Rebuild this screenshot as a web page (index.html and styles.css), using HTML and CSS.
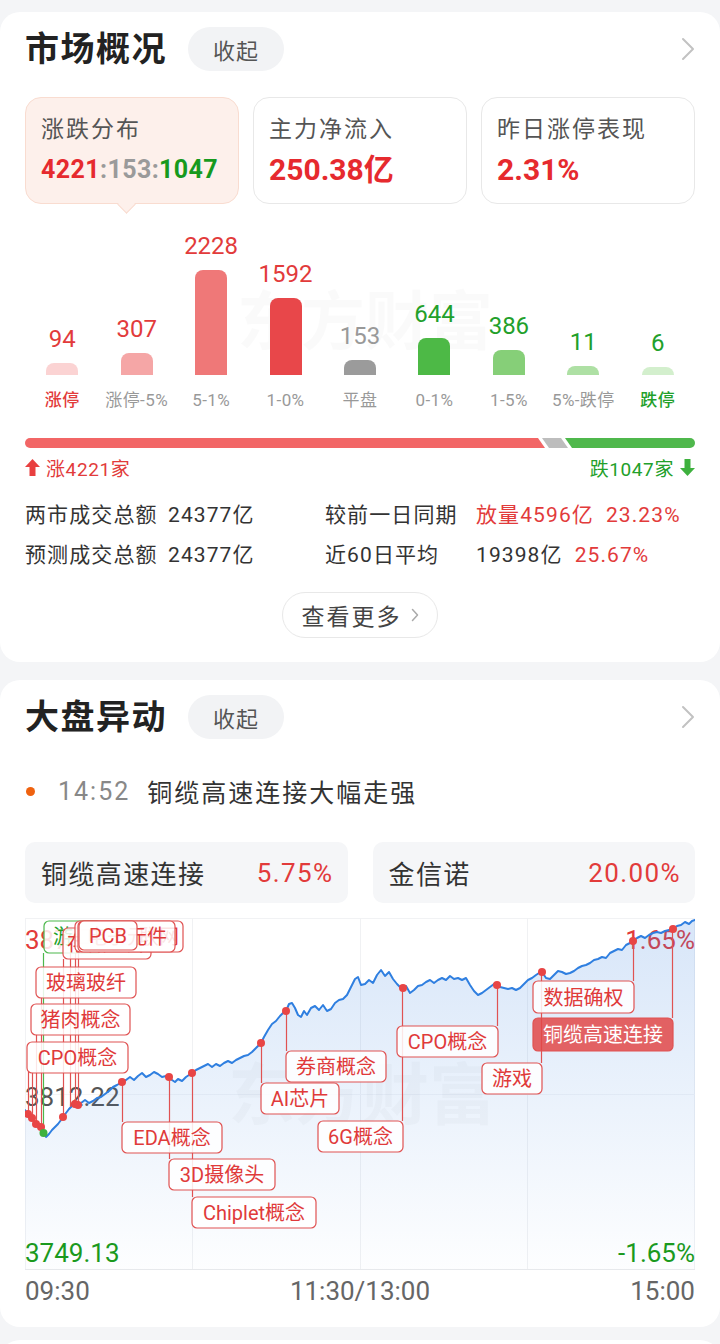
FILE: index.html
```html
<!DOCTYPE html>
<html lang="zh-CN">
<head>
<meta charset="utf-8">
<title>市场概况</title>
<link rel="stylesheet" href="styles.css">
</head>
<body>
<section class="card card-market">
  <header class="card-head">
    <h2 class="card-title">市场概况</h2>
    <span class="pill">收起</span>
    <svg class="chev" width="14" height="24" viewBox="0 0 14 24"><polyline points="2,2 12,12 2,22"/></svg>
  </header>

  <div class="tabs">
    <div class="tab tab-on">
      <div class="tab-label">涨跌分布</div>
      <div class="tab-num tab-num-sm"><span class="c-up">4221</span><span class="c-flat">:153:</span><span class="c-down">1047</span></div>
    </div>
    <div class="tab">
      <div class="tab-label">主力净流入</div>
      <div class="tab-num c-up">250.38亿</div>
    </div>
    <div class="tab">
      <div class="tab-label">昨日涨停表现</div>
      <div class="tab-num c-up">2.31%</div>
    </div>
  </div>

  <div class="dist">
    <div class="watermark wm-bars">东方财富</div>
    <div class="dist-col">
      <div class="dist-top"><span class="dist-val c-up2">94</span><span class="bar b1" style="height:12px"></span></div>
      <span class="dist-cat c-up2">涨停</span>
    </div>
    <div class="dist-col">
      <div class="dist-top"><span class="dist-val c-up2">307</span><span class="bar b2" style="height:22px"></span></div>
      <span class="dist-cat">涨停-5%</span>
    </div>
    <div class="dist-col">
      <div class="dist-top"><span class="dist-val c-up2">2228</span><span class="bar b3" style="height:105px"></span></div>
      <span class="dist-cat">5-1%</span>
    </div>
    <div class="dist-col">
      <div class="dist-top"><span class="dist-val c-up2">1592</span><span class="bar b4" style="height:77px"></span></div>
      <span class="dist-cat">1-0%</span>
    </div>
    <div class="dist-col">
      <div class="dist-top"><span class="dist-val c-gray">153</span><span class="bar b5" style="height:15px"></span></div>
      <span class="dist-cat">平盘</span>
    </div>
    <div class="dist-col">
      <div class="dist-top"><span class="dist-val c-down2">644</span><span class="bar b6" style="height:37px"></span></div>
      <span class="dist-cat">0-1%</span>
    </div>
    <div class="dist-col">
      <div class="dist-top"><span class="dist-val c-down2">386</span><span class="bar b7" style="height:25px"></span></div>
      <span class="dist-cat">1-5%</span>
    </div>
    <div class="dist-col">
      <div class="dist-top"><span class="dist-val c-down2">11</span><span class="bar b8" style="height:9px"></span></div>
      <span class="dist-cat">5%-跌停</span>
    </div>
    <div class="dist-col">
      <div class="dist-top"><span class="dist-val c-down2">6</span><span class="bar b9" style="height:8px"></span></div>
      <span class="dist-cat c-down2">跌停</span>
    </div>
  </div>

  <div class="ratio">
    <span class="seg seg-up"></span>
    <span class="seg seg-flat"></span>
    <span class="seg seg-down"></span>
  </div>

  <div class="updown">
    <span class="ud ud-up">
      <svg width="15" height="17" viewBox="0 0 15 17"><path d="M7.5 0 L15 8 H10.5 V17 H4.5 V8 H0 Z"/></svg>涨4221家
    </span>
    <span class="ud ud-down">
      跌1047家<svg width="15" height="17" viewBox="0 0 15 17"><path d="M4.5 0 H10.5 V9 H15 L7.5 17 L0 9 H4.5 Z"/></svg>
    </span>
  </div>

  <div class="stats">
    <span class="st-label">两市成交总额</span>
    <span class="st-val">24377亿</span>
    <span class="st-label">较前一日同期</span>
    <span class="st-val"><span class="c-up2">放量4596亿</span><span class="st-pct c-up2">23.23%</span></span>

    <span class="st-label">预测成交总额</span>
    <span class="st-val">24377亿</span>
    <span class="st-label">近60日平均</span>
    <span class="st-val"><span>19398亿</span><span class="st-pct c-up2">25.67%</span></span>
  </div>

  <div class="more-wrap">
    <span class="more">查看更多<svg width="8" height="14" viewBox="0 0 8 14"><polyline points="1.5,1.5 6.5,7 1.5,12.5"/></svg></span>
  </div>
</section>

<section class="card card-move">
  <header class="card-head">
    <h2 class="card-title">大盘异动</h2>
    <span class="pill">收起</span>
    <svg class="chev" width="14" height="24" viewBox="0 0 14 24"><polyline points="2,2 12,12 2,22"/></svg>
  </header>

  <div class="news">
    <span class="news-dot"></span>
    <span class="news-time">14:52</span>
    <span class="news-text">铜缆高速连接大幅走强</span>
  </div>

  <div class="picks">
    <div class="pick"><span>铜缆高速连接</span><span class="c-up2">5.75%</span></div>
    <div class="pick"><span>金信诺</span><span class="c-up2">20.00%</span></div>
  </div>

  <svg class="chart" width="670" height="352" viewBox="25 918 670 352">
    <defs>
      <linearGradient id="areaFill" x1="0" y1="0" x2="0" y2="1">
        <stop offset="0" stop-color="#3a82e0" stop-opacity="0.2"/>
        <stop offset="1" stop-color="#3a82e0" stop-opacity="0.01"/>
      </linearGradient>
    </defs>
    <rect class="frame" x="25.5" y="918.5" width="669" height="351"/>
    <line class="grid" x1="192.5" y1="918" x2="192.5" y2="1270"/>
    <line class="grid" x1="360.5" y1="918" x2="360.5" y2="1270"/>
    <line class="grid" x1="527.5" y1="918" x2="527.5" y2="1270"/>
    <line class="grid grid-h" x1="25" y1="1094.5" x2="695" y2="1094.5"/>
    <line class="base" x1="25" y1="1269.5" x2="695" y2="1269.5"/>

    <text class="wm" x="228" y="1096">东方财富</text>

    <text class="axis ax-up" x="25" y="940">3875.31</text>
    <text class="axis ax-mid" x="25" y="1097">3812.22</text>
    <text class="axis ax-down" x="25" y="1253">3749.13</text>
    <text class="axis ax-up ax-end" x="695" y="940">1.65%</text>
    <text class="axis ax-down ax-end" x="695" y="1253">-1.65%</text>

    <path class="area" d="M25,1110 L28,1114 30,1116 32,1118 34,1121 36,1124 38,1126 41,1127 43,1133 46,1137 49,1134 52,1130 55,1127 58,1124 61,1120 63,1117 66,1113 69,1109 72,1106 75,1104 78,1105 81,1103 85,1100 89,1103 93,1101 97,1098 101,1097 105,1094 109,1091 113,1087 117,1085 122,1082 126,1080 130,1077 134,1080 138,1076 142,1073 146,1077 150,1075 154,1072 158,1074 162,1077 166,1076 169,1077 172,1080 175,1082 178,1079 182,1081 186,1077 189,1075 192,1073 196,1070 200,1068 204,1066 208,1064 212,1067 216,1064 220,1066 224,1063 228,1061 232,1063 236,1060 240,1058 244,1056 248,1055 252,1052 256,1048 261,1043 264,1037 268,1030 272,1024 276,1021 280,1016 283,1013 286,1011 289,1004 292,1003 295,1008 298,1015 301,1017 304,1011 307,1015 311,1008 315,1006 319,1010 323,1005 327,1011 331,1009 335,1003 339,1000 343,999 347,995 351,987 355,979 358,977 361,985 365,984 369,980 373,983 377,975 381,970 385,976 389,972 393,979 397,984 400,987 403,988 406,986 410,993 414,990 418,986 422,985 426,982 430,980 434,983 438,980 442,978 446,980 450,976 454,979 458,978 462,980 466,978 470,985 474,991 478,995 482,993 486,990 490,987 494,984 497,985 500,987 504,988 508,989 512,988 516,990 520,988 524,984 528,980 532,978 536,975 539,973 542,972 546,978 550,979 554,975 558,971 562,972 566,974 570,973 574,971 578,968 582,966 586,965 590,963 594,960 598,959 602,957 606,958 610,953 614,951 618,949 622,950 626,945 630,943 633,941 637,938 641,936 645,938 649,935 653,933 657,932 661,933 665,931 669,930 673,929 677,926 681,925 685,922 689,924 692,921 695,920 L695,1270 L25,1270 Z"/>
    <polyline class="line" points="25,1110 28,1114 30,1116 32,1118 34,1121 36,1124 38,1126 41,1127 43,1133 46,1137 49,1134 52,1130 55,1127 58,1124 61,1120 63,1117 66,1113 69,1109 72,1106 75,1104 78,1105 81,1103 85,1100 89,1103 93,1101 97,1098 101,1097 105,1094 109,1091 113,1087 117,1085 122,1082 126,1080 130,1077 134,1080 138,1076 142,1073 146,1077 150,1075 154,1072 158,1074 162,1077 166,1076 169,1077 172,1080 175,1082 178,1079 182,1081 186,1077 189,1075 192,1073 196,1070 200,1068 204,1066 208,1064 212,1067 216,1064 220,1066 224,1063 228,1061 232,1063 236,1060 240,1058 244,1056 248,1055 252,1052 256,1048 261,1043 264,1037 268,1030 272,1024 276,1021 280,1016 283,1013 286,1011 289,1004 292,1003 295,1008 298,1015 301,1017 304,1011 307,1015 311,1008 315,1006 319,1010 323,1005 327,1011 331,1009 335,1003 339,1000 343,999 347,995 351,987 355,979 358,977 361,985 365,984 369,980 373,983 377,975 381,970 385,976 389,972 393,979 397,984 400,987 403,988 406,986 410,993 414,990 418,986 422,985 426,982 430,980 434,983 438,980 442,978 446,980 450,976 454,979 458,978 462,980 466,978 470,985 474,991 478,995 482,993 486,990 490,987 494,984 497,985 500,987 504,988 508,989 512,988 516,990 520,988 524,984 528,980 532,978 536,975 539,973 542,972 546,978 550,979 554,975 558,971 562,972 566,974 570,973 574,971 578,968 582,966 586,965 590,963 594,960 598,959 602,957 606,958 610,953 614,951 618,949 622,950 626,945 630,943 633,941 637,938 641,936 645,938 649,935 653,933 657,932 661,933 665,931 669,930 673,929 677,926 681,925 685,922 689,924 692,921 695,920"/>

    <line class="link link-green" x1="43.5" y1="953" x2="43.5" y2="1133"/>
    <line class="link" x1="63.5" y1="959" x2="63.5" y2="1117"/>
    <line class="link" x1="75.5" y1="952" x2="75.5" y2="1104"/>
    <line class="link" x1="78.5" y1="952" x2="78.5" y2="1105"/>
    <line class="link" x1="70.5" y1="952" x2="70.5" y2="1107"/>
    <line class="link" x1="41.5" y1="997" x2="41.5" y2="1127"/>
    <line class="link" x1="36.5" y1="1034" x2="36.5" y2="1124"/>
    <line class="link" x1="32.5" y1="1072" x2="32.5" y2="1118"/>
    <line class="link" x1="28.5" y1="1072" x2="28.5" y2="1114"/>
    <line class="link" x1="122.5" y1="1082" x2="122.5" y2="1122"/>
    <line class="link" x1="169.5" y1="1077" x2="169.5" y2="1159"/>
    <line class="link" x1="192.5" y1="1073" x2="192.5" y2="1197"/>
    <line class="link" x1="261.5" y1="1043" x2="261.5" y2="1083"/>
    <line class="link" x1="286.5" y1="1011" x2="286.5" y2="1051"/>
    <line class="link" x1="402.5" y1="988" x2="402.5" y2="1121"/>
    <line class="link" x1="497.5" y1="985" x2="497.5" y2="1026"/>
    <line class="link" x1="541.5" y1="972" x2="541.5" y2="1063"/>
    <line class="link" x1="633.5" y1="941" x2="633.5" y2="981"/>
    <line class="link" x1="672.5" y1="929" x2="672.5" y2="1018"/>

    <g class="tag tag-green"><rect x="44" y="921" width="58" height="32" rx="5"/><text x="73" y="937">游戏</text></g>
    <g class="tag"><rect x="63" y="928" width="88" height="31" rx="5"/><text x="107" y="944">存储芯片</text></g>
    <g class="tag"><rect x="75" y="921" width="108" height="31" rx="5"/><text x="129" y="937">工业互联网</text></g>
    <g class="tag"><rect x="78" y="921" width="97" height="31" rx="5"/><text x="127" y="937">电子元件</text></g>
    <g class="tag tag-solid"><rect x="79" y="921" width="58" height="29" rx="5"/><text x="108" y="936">PCB</text></g>
    <g class="tag"><rect x="36" y="967" width="100" height="31" rx="5"/><text x="86" y="983">玻璃玻纤</text></g>
    <g class="tag"><rect x="31" y="1004" width="99" height="31" rx="5"/><text x="80.5" y="1020">猪肉概念</text></g>
    <g class="tag"><rect x="27" y="1042" width="101" height="31" rx="5"/><text x="77.5" y="1058">CPO概念</text></g>

    <g class="tag"><rect x="122" y="1122" width="100" height="31" rx="5"/><text x="172" y="1138">EDA概念</text></g>
    <g class="tag"><rect x="169" y="1159" width="106" height="31" rx="5"/><text x="222" y="1175">3D摄像头</text></g>
    <g class="tag"><rect x="192" y="1197" width="124" height="31" rx="5"/><text x="254" y="1213">Chiplet概念</text></g>
    <g class="tag"><rect x="261" y="1083" width="78" height="31" rx="5"/><text x="300" y="1099">AI芯片</text></g>
    <g class="tag"><rect x="286" y="1051" width="100" height="31" rx="5"/><text x="336" y="1067">券商概念</text></g>
    <g class="tag"><rect x="318" y="1121" width="85" height="31" rx="5"/><text x="360.5" y="1137">6G概念</text></g>
    <g class="tag"><rect x="397" y="1026" width="101" height="31" rx="5"/><text x="447.5" y="1042">CPO概念</text></g>
    <g class="tag"><rect x="482" y="1063" width="60" height="31" rx="5"/><text x="512" y="1079">游戏</text></g>
    <g class="tag"><rect x="533" y="981" width="101" height="32" rx="5"/><text x="583.5" y="997.5">数据确权</text></g>
    <g class="tag tag-fill"><rect x="533" y="1018" width="140" height="33" rx="5"/><text x="603" y="1035">铜缆高速连接</text></g>

    <circle class="dot" cx="28" cy="1114" r="4"/>
    <circle class="dot" cx="32" cy="1118" r="4"/>
    <circle class="dot" cx="36" cy="1124" r="4"/>
    <circle class="dot" cx="41" cy="1127" r="4"/>
    <circle class="dot dot-green" cx="43.5" cy="1133" r="4"/>
    <circle class="dot" cx="63" cy="1117" r="4"/>
    <circle class="dot" cx="75" cy="1104" r="4"/>
    <circle class="dot" cx="78" cy="1105" r="4"/>
    <circle class="dot" cx="122" cy="1082" r="4"/>
    <circle class="dot" cx="169" cy="1077" r="4"/>
    <circle class="dot" cx="192" cy="1073" r="4"/>
    <circle class="dot" cx="261" cy="1043" r="4"/>
    <circle class="dot" cx="286" cy="1011" r="4"/>
    <circle class="dot" cx="403" cy="988" r="4"/>
    <circle class="dot" cx="497" cy="985" r="4"/>
    <circle class="dot" cx="542" cy="972" r="4"/>
    <circle class="dot" cx="633" cy="941" r="4"/>
    <circle class="dot" cx="673" cy="929" r="4"/>
  </svg>

  <div class="times">
    <span>09:30</span>
    <span>11:30/13:00</span>
    <span>15:00</span>
  </div>
</section>

<section class="card card-stub"></section>
</body>
</html>
```

FILE: styles.css
```css
* { box-sizing: border-box; margin: 0; padding: 0; }

body {
  width: 720px;
  padding-top: 12px;
  background: #f4f5f7;
  font-family: Roboto, "Noto Sans CJK SC", sans-serif;
  color: #333;
  overflow: hidden;
}

.card {
  background: #fff;
  border-radius: 20px;
  padding: 15px 25px 24px;
}
.card + .card { margin-top: 18px; }
.card-move { padding-bottom: 21px; }
.card-stub { height: 40px; margin-top: 13px !important; padding: 0; }

/* header */
.card-head {
  display: flex;
  align-items: center;
  height: 44px;
}
.card-title {
  font-size: 34px;
  line-height: 44px;
  font-weight: 700;
  letter-spacing: 1.5px;
  color: #222;
}
.pill {
  margin-left: 21px;
  width: 96px;
  height: 44px;
  border-radius: 22px;
  background: #f2f3f5;
  color: #555;
  font-size: 22px;
  letter-spacing: 1px;
  display: flex;
  align-items: center;
  justify-content: center;
}
.chev { margin-left: auto; }
.chev polyline { fill: none; stroke: #c2c2c2; stroke-width: 2; stroke-linecap: round; stroke-linejoin: round; }

/* colors */
.c-up { color: #e62a2e; }
.c-up2 { color: #e23b3b; }
.c-flat { color: #9a9a9a; }
.c-down { color: #179a1d; }
.c-down2 { color: #22a02a; }
.c-gray { color: #999; }

/* tabs */
.tabs {
  display: grid;
  grid-template-columns: repeat(3, 1fr);
  gap: 14px;
  margin-top: 26px;
}
.tab {
  position: relative;
  height: 107px;
  border: 1.5px solid #e8e8e8;
  border-radius: 16px;
  padding: 17px 0 0 15px;
  background: #fff;
}
.tab-on {
  background: #fdf0eb;
  border-color: #f9dcd0;
}
.tab-on::after {
  content: "";
  position: absolute;
  left: 94px;
  bottom: -7.5px;
  width: 12px;
  height: 12px;
  background: #fdf0eb;
  border-right: 1.5px solid #f9dcd0;
  border-bottom: 1.5px solid #f9dcd0;
  transform: rotate(45deg);
}
.tab-label {
  font-size: 23px;
  line-height: 30px;
  letter-spacing: 2px;
  color: #555;
}
.tab-num {
  margin-top: 7px;
  font-size: 30px;
  line-height: 36px;
  font-weight: 700;
}
.tab-num-sm { font-size: 25px; letter-spacing: 0.4px; }

/* distribution */
.dist {
  position: relative;
  display: grid;
  grid-template-columns: repeat(9, 1fr);
}
.watermark {
  position: absolute;
  z-index: 0;
  font-weight: 700;
  color: rgba(0, 0, 0, 0.018);
  white-space: nowrap;
}
.wm-bars { left: 212px; top: 84px; font-size: 64px; line-height: 70px; }
.dist-col {
  position: relative;
  z-index: 1;
  display: flex;
  flex-direction: column;
  align-items: center;
}
.dist-top {
  height: 171px;
  display: flex;
  flex-direction: column;
  justify-content: flex-end;
  align-items: center;
}
.dist-val {
  font-size: 24px;
  line-height: 28px;
  margin-bottom: 10px;
}
.bar {
  display: block;
  width: 32px;
  border-radius: 8px 8px 0 0;
}
.b1 { background: #fbd3d3; }
.b2 { background: #f5a6a6; }
.b3 { background: #ef7878; }
.b4 { background: #e8474a; }
.b5 { background: #9b9b9b; }
.b6 { background: #4db946; }
.b7 { background: #86cf78; }
.b8 { background: #aee0a4; }
.b9 { background: #d3efcd; }
.dist-cat {
  margin-top: 13px;
  font-size: 17px;
  line-height: 24px;
  letter-spacing: 0.4px;
  color: #999;
  white-space: nowrap;
}
.dist-cat.c-up2, .dist-cat.c-down2 { font-weight: 500; }
.dist-cat.c-up2 { color: #e23b3b; }
.dist-cat.c-down2 { color: #22a02a; }

/* ratio bar */
.ratio {
  display: flex;
  height: 10px;
  margin-top: 26px;
  border-radius: 5px;
  overflow: hidden;
}
.seg { display: block; height: 100%; }
.seg-up {
  flex: 0 0 520px;
  background: #f26666;
  clip-path: polygon(0 0, calc(100% - 7px) 0, 100% 100%, 0 100%);
}
.seg-flat {
  flex: 0 0 26px;
  margin-left: -3px;
  background: #bdbdbd;
  clip-path: polygon(0 0, calc(100% - 7px) 0, 100% 100%, 7px 100%);
}
.seg-down {
  flex: 1 1 auto;
  margin-left: -3px;
  background: #4fb84c;
  clip-path: polygon(0 0, 100% 0, 100% 100%, 7px 100%);
}

.updown {
  display: flex;
  justify-content: space-between;
  align-items: center;
  margin-top: 7px;
  height: 24px;
  font-size: 19px;
  letter-spacing: 0.6px;
}
.ud { display: flex; align-items: center; gap: 6px; }
.ud-up { color: #e23b3b; }
.ud-up svg path { fill: #e84040; }
.ud-down { color: #22a02a; }
.ud-down svg path { fill: #3eb13e; }

/* stats */
.stats {
  display: grid;
  grid-template-columns: 143px 157px 151px 1fr;
  grid-auto-rows: 40px;
  align-items: center;
  margin-top: 14px;
  font-size: 21px;
  letter-spacing: 1.1px;
  color: #333;
}
.st-pct { margin-left: 12px; }

.more-wrap {
  display: flex;
  justify-content: center;
  margin-top: 19px;
}
.more {
  width: 156px;
  height: 46px;
  border: 1.5px solid #e8e8e8;
  border-radius: 23px;
  display: flex;
  align-items: center;
  justify-content: center;
  gap: 9px;
  font-size: 23px;
  letter-spacing: 2px;
  color: #444;
}
.more svg polyline { fill: none; stroke: #aaa; stroke-width: 1.5; stroke-linecap: round; stroke-linejoin: round; }

/* news */
.news {
  display: flex;
  align-items: center;
  height: 36px;
  margin-top: 34px;
  font-size: 25px;
  letter-spacing: 2px;
}
.news-dot {
  width: 9px;
  height: 9px;
  margin-left: 1px;
  margin-right: 23px;
  border-radius: 50%;
  background: #ef620f;
}
.news-time { color: #888; margin-right: 17px; }
.news-text { color: #333; }

.picks {
  display: grid;
  grid-template-columns: 1fr 1fr;
  gap: 25px;
  margin-top: 33px;
}
.pick {
  height: 61px;
  border-radius: 10px;
  background: #f5f6f8;
  display: flex;
  align-items: center;
  justify-content: space-between;
  padding: 0 14px 0 16px;
  font-size: 26px;
  letter-spacing: 1.4px;
  color: #333;
}

/* chart */
.chart {
  display: block;
  margin-top: 15px;
  font-family: Roboto, "Noto Sans CJK SC", sans-serif;
}
.chart .frame { fill: none; stroke: #f1f2f4; stroke-width: 1; }
.chart .grid { stroke: #f0f1f3; stroke-width: 1; }
.chart .grid-h { stroke: #f4f5f7; }
.chart .base { stroke: #e9eaec; stroke-width: 1; }
.chart .wm { font-size: 67px; font-weight: 700; fill: rgba(0, 0, 0, 0.025); dominant-baseline: central; }
.chart .axis { font-size: 26px; dominant-baseline: central; }
.chart .ax-up { fill: #e23b3b; }
.chart .ax-mid { fill: #555; }
.chart .ax-down { fill: #1a9a1a; }
.chart .ax-end { text-anchor: end; }
.chart .area { fill: url(#areaFill); }
.chart .line { fill: none; stroke: #2f7fe0; stroke-width: 2; stroke-linejoin: round; stroke-linecap: round; }
.chart .link { stroke: #e05252; stroke-width: 1.2; }
.chart .link-green { stroke: #4cb84c; }
.chart .tag rect { fill: rgba(255, 255, 255, 0.86); stroke: #e05252; stroke-width: 1.2; }
.chart .tag text { fill: #e03a3a; font-size: 20px; text-anchor: middle; dominant-baseline: central; }
.chart .tag-green rect { stroke: #4cb84c; }
.chart .tag-green text { fill: #22a02a; }
.chart .tag-solid rect { fill: rgba(255, 255, 255, 0.9); }
.chart .tag-fill rect { fill: rgba(226, 72, 72, 0.85); stroke: #e05252; }
.chart .tag-fill text { fill: #fff; }
.chart .dot { fill: #e84545; }
.chart .dot-green { fill: #3eb13e; }

.times {
  display: flex;
  justify-content: space-between;
  margin-top: 6px;
  height: 30px;
  line-height: 30px;
  font-size: 26px;
  color: #666;
}
```
